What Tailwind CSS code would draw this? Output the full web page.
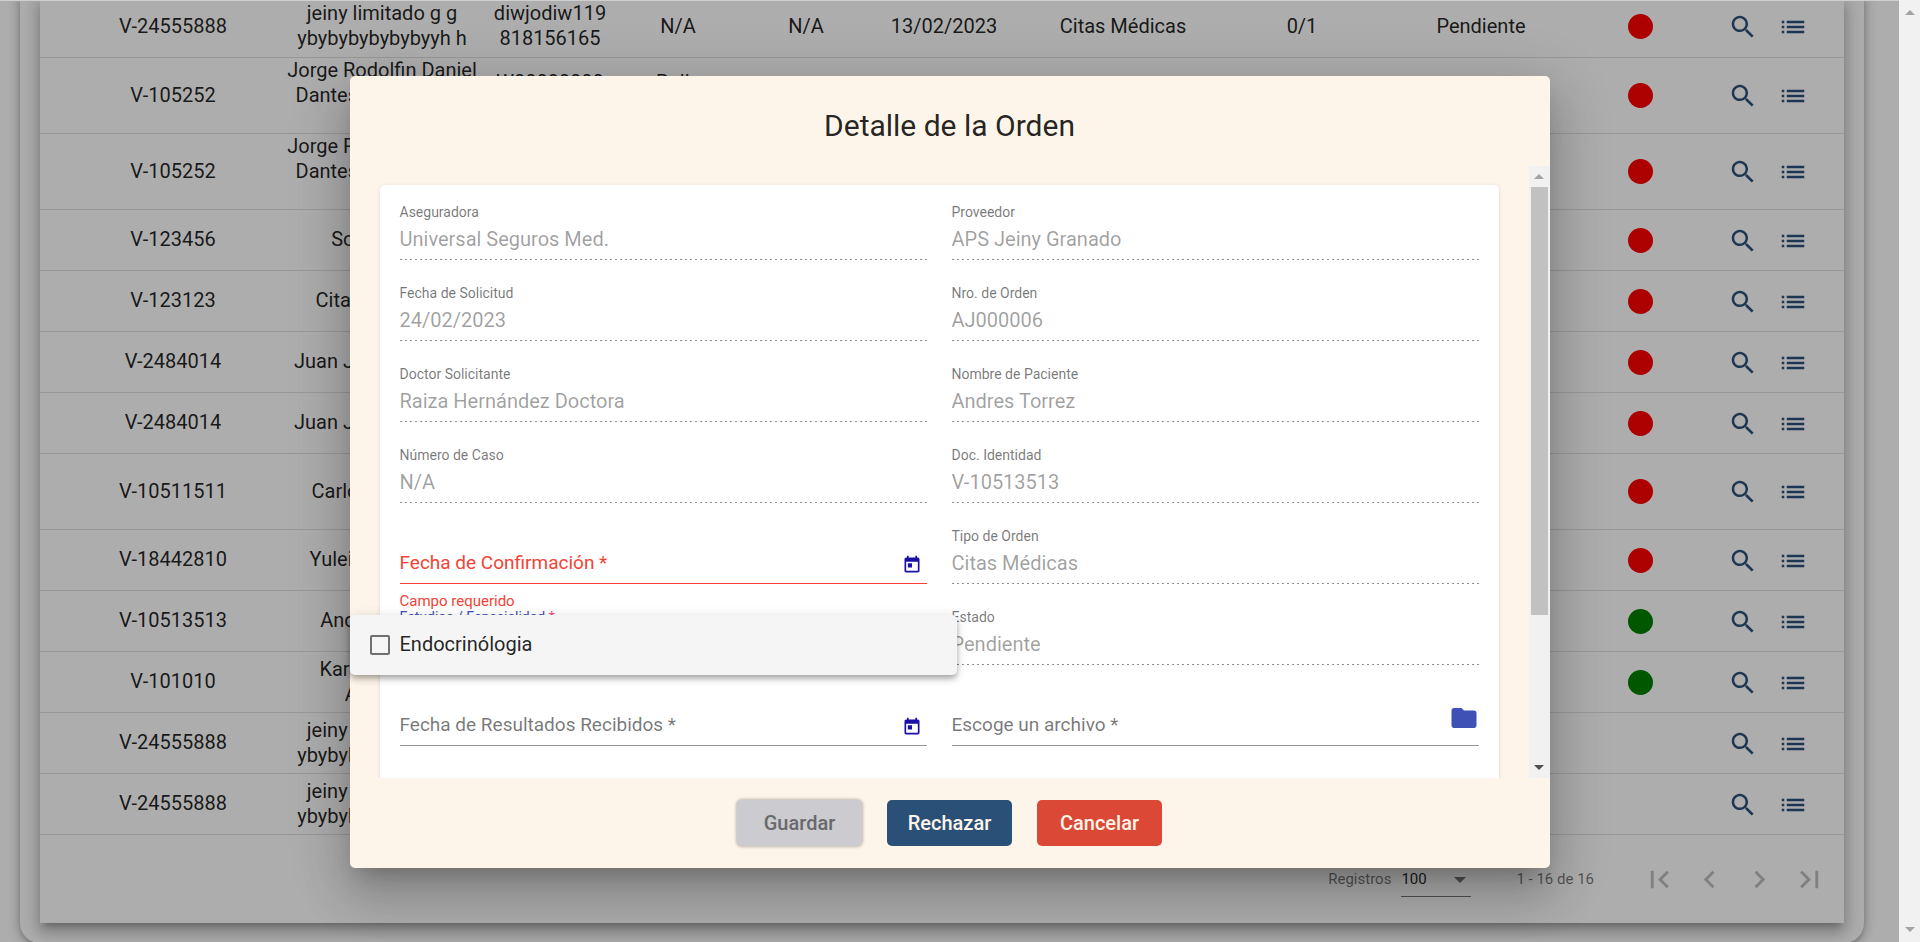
<!DOCTYPE html>
<html lang="es">
<head>
<meta charset="utf-8">
<title>Detalle de la Orden</title>
<script src="https://cdn.jsdelivr.net/npm/@tailwindcss/browser@4"></script>
</head>
<body class="flex h-screen overflow-hidden bg-white font-['Roboto',sans-serif] text-xl leading-[25px] text-black/87">
<svg class="hidden" aria-hidden="true">
  <symbol id="search" viewBox="0 0 24 24"><path d="M15.5 14h-.79l-.28-.27C15.41 12.59 16 11.11 16 9.5 16 5.91 13.09 3 9.5 3S3 5.91 3 9.5 5.91 16 9.5 16c1.61 0 3.09-.59 4.23-1.57l.27.28v.79l5 4.99L20.49 19l-4.99-5zm-6 0C7.01 14 5 11.99 5 9.5S7.01 5 9.5 5 14 7.01 14 9.5 11.99 14 9.5 14z"/></symbol>
  <symbol id="list" viewBox="0 0 24 24"><path d="M3 13h2v-2H3v2zm0 4h2v-2H3v2zm0-8h2V7H3v2zm4 4h14v-2H7v2zm0 4h14v-2H7v2zM7 7v2h14V7H7z"/></symbol>
  <symbol id="today" viewBox="0 0 24 24"><path d="M19 3h-1V1h-2v2H8V1H6v2H5c-1.11 0-1.99.9-1.99 2L3 19c0 1.1.89 2 2 2h14c1.1 0 2-.9 2-2V5c0-1.1-.9-2-2-2zm0 16H5V8h14v11zM7 10h5v5H7z"/></symbol>
  <symbol id="folder" viewBox="0 0 24 24"><path d="M10 4H4c-1.1 0-1.99.9-1.99 2L2 18c0 1.1.9 2 2 2h16c1.1 0 2-.9 2-2V8c0-1.1-.9-2-2-2h-8l-2-2z"/></symbol>
  <symbol id="first" viewBox="0 0 24 24"><path d="M18.41 16.59L13.82 12l4.59-4.59L17 6l-6 6 6 6zM6 6h2v12H6z"/></symbol>
  <symbol id="prev" viewBox="0 0 24 24"><path d="M15.41 7.41L14 6l-6 6 6 6 1.41-1.41L10.83 12z"/></symbol>
  <symbol id="next" viewBox="0 0 24 24"><path d="M10 6L8.59 7.41 13.17 12l-4.58 4.59L10 18l6-6z"/></symbol>
  <symbol id="last" viewBox="0 0 24 24"><path d="M5.59 7.41L10.18 12l-4.59 4.59L7 18l6-6-6-6zM16 6h2v12h-2z"/></symbol>
</svg>

<div class="relative h-full min-w-0 flex-1 overflow-hidden border-t border-[#cfcfcf]">
  <!-- Orders page -->
  <main class="-mt-[5px] px-5">
    <div class="mr-[15px] rounded-b-[20px] px-5 pb-5 shadow-[0_4px_5px_-2px_rgba(0,0,0,.2),0_1px_12px_1px_rgba(0,0,0,.3)]">
      <div class="bg-white pb-5 shadow-[0_6px_6px_-4px_rgba(0,0,0,.2),0_10px_12px_1px_rgba(0,0,0,.16),0_4px_18px_3px_rgba(0,0,0,.16)]">
        <table class="w-full table-fixed border-collapse text-center">
          <colgroup>
            <col class="w-[244px]"><col class="w-[196px]"><col class="w-[140px]"><col class="w-[116px]"><col class="w-[140px]"><col class="w-[136px]"><col class="w-[222px]"><col class="w-[136px]"><col class="w-[222px]"><col class="w-[96px]"><col class="w-[156px]">
          </colgroup>
          <tbody id="rows"></tbody>
        </table>
        <div class="flex h-[68px] items-center justify-end pt-[22px] pr-[10px] text-[15px] text-black/54">
          <label for="size" class="mr-[10px]">Registros</label>
          <div class="relative mr-[45px] border-b border-black/54 pt-1 pb-1">
            <select id="size" class="w-[70px] appearance-none bg-transparent text-black/87"><option>100</option></select>
            <span class="pointer-events-none absolute top-[14px] right-[5px] border-x-6 border-t-6 border-x-transparent border-t-black/54"></span>
          </div>
          <span class="mr-10">1 - 16 de 16</span>
          <button aria-label="Primera página" class="grid size-[50px] place-items-center fill-black/26"><svg class="size-[35px]"><use href="#first"/></svg></button>
          <button aria-label="Página anterior" class="grid size-[50px] place-items-center fill-black/26"><svg class="size-[35px]"><use href="#prev"/></svg></button>
          <button aria-label="Página siguiente" class="grid size-[50px] place-items-center fill-black/26"><svg class="size-[35px]"><use href="#next"/></svg></button>
          <button aria-label="Última página" class="grid size-[50px] place-items-center fill-black/26"><svg class="size-[35px]"><use href="#last"/></svg></button>
        </div>
      </div>
    </div>
  </main>

  <!-- Order dialog over the dimmed page -->
  <div class="absolute inset-0 flex items-center justify-center bg-black/32 pt-px">
    <section role="dialog" aria-labelledby="title" class="relative w-full max-w-[1200px] rounded-[5px] bg-[#fdf5e9] shadow-[0_14px_19px_-9px_rgba(0,0,0,.2),0_30px_48px_4px_rgba(0,0,0,.14),0_11px_58px_10px_rgba(0,0,0,.12)]">
      <h1 id="title" class="px-[30px] pt-[30px] pb-5 text-center text-[30px] leading-[40px]">Detalle de la Orden</h1>
      <div class="flex h-[65vh]">
        <div class="min-w-0 flex-1 overflow-hidden px-[30px] pt-[19px]">
          <form id="form" class="grid h-[700px] grid-cols-2 content-start gap-x-[25px] rounded-[5px] bg-white px-5 pt-[15px] shadow-[0_2px_2px_-1px_rgba(0,0,0,.12),0_1px_4px_0_rgba(0,0,0,.12)]"></form>
        </div>
        <div class="flex w-[21px] flex-col items-center bg-[#f1f1f1] py-2">
          <span class="border-x-5 border-b-5 border-x-transparent border-b-[#a3a3a3]"></span>
          <span class="mt-2 h-[428px] w-[17px] bg-[#c1c1c1]"></span>
          <span class="mt-auto border-x-5 border-t-5 border-x-transparent border-t-[#505050]"></span>
        </div>
      </div>
      <div class="flex justify-center gap-[25px] py-[22px] text-xl font-medium">
        <button disabled class="h-[46px] w-[125px] rounded-[5px] bg-[#cbcbd0] text-[#69696c] shadow-[0_0_3px_1px_rgba(0,0,0,.25)]">Guardar</button>
        <button class="h-[46px] w-[125px] rounded-[5px] bg-[#2b5078] text-[#fdf5e9]">Rechazar</button>
        <button class="h-[46px] w-[125px] rounded-[5px] bg-[#db4835] text-[#fdf5e9]">Cancelar</button>
      </div>
      <label class="absolute top-[539px] left-0 flex h-[60px] w-[607px] items-center gap-[10px] rounded-[5px] bg-[#f5f5f5] px-5 shadow-[0_3px_5px_-1px_rgba(0,0,0,.2),0_5px_6px_0_rgba(0,0,0,.14),0_1px_12px_0_rgba(0,0,0,.12)]">
        <input type="checkbox" class="size-5 appearance-none rounded-[2px] border-2 border-black/54">Endocrinólogia
      </label>
    </section>
  </div>
</div>

<!-- Page scroll bar -->
<div class="flex w-[21px] flex-col items-center justify-between bg-[#f1f1f1] py-[10px]">
  <span class="border-x-5 border-b-5 border-x-transparent border-b-[#a3a3a3]"></span>
  <span class="border-x-5 border-t-5 border-x-transparent border-t-[#a3a3a3]"></span>
</div>

<script>
const limited = ['jeiny limitado g g ybybybybybybyyh h', 'diwjodiw119 818156165', 'N/A', 'N/A', '13/02/2023', 'Citas Médicas', '0/1', 'Pendiente'];
const rows = [
  ['V-24555888', limited, 'red'],
  ['V-105252', ['Jorge Rodolfin Daniel Dantes Rodríguez J Díaz', 'W00000000 000', 'Polic Salud'], 'red', 1],
  ['V-105252', ['Jorge Rodolfin Daniel Dantes Rodríguez J Díaz'], 'red', 1],
  ['V-123456', ['Sol Moreno'], 'red'],
  ['V-123123', ['Cita Preventiva'], 'red'],
  ['V-2484014', ['Juan José Martínez'], 'red'],
  ['V-2484014', ['Juan José Martínez'], 'red'],
  ['V-10511511', ['Carlos Martínez'], 'red', 1],
  ['V-18442810', ['Yuleima Moreno'], 'red'],
  ['V-10513513', ['Andres Torrez'], 'green'],
  ['V-101010', ['Karen Moreno Andrade'], 'green'],
  ['V-24555888', ['jeiny limitado g g ybybybybybybyyh h'], ''],
  ['V-24555888', ['jeiny limitado g g ybybybybybybyyh h'], '']
];
const dots = {
  red: '<span class="inline-block size-[25px] rounded-full bg-[#ff0000] align-middle"></span>',
  green: '<span class="inline-block size-[25px] rounded-full bg-[#008000] align-middle"></span>',
  '': ''
};
document.getElementById('rows').innerHTML = rows.map(([id, cells, dot, tall]) => {
  const filled = [...cells, ...Array(8 - cells.length).fill('')];
  return `<tr class="${tall ? 'h-[76px]' : 'h-[61px]'} border-b border-black/12"><td class="pl-[22px]">${id}</td>` +
    filled.map((c, i) => `<td class="${i === 1 ? 'px-3' : i === 2 ? 'px-6' : ''}">${c}</td>`).join('') +
    `<td>${dots[dot]}</td><td><div class="flex justify-center gap-5 fill-[#2b5078] pt-[2px] pl-[3px]">
      <button aria-label="Ver detalle"><svg class="size-[30px]"><use href="#search"/></svg></button>
      <button aria-label="Ver lista"><svg class="size-[30px]"><use href="#list"/></svg></button></div></td></tr>`;
}).join('');

const fields = [
  ['Aseguradora', 'Universal Seguros Med.'], ['Proveedor', 'APS Jeiny Granado'],
  ['Fecha de Solicitud', '24/02/2023'], ['Nro. de Orden', 'AJ000006'],
  ['Doctor Solicitante', 'Raiza Hernández Doctora'], ['Nombre de Paciente', 'Andres Torrez'],
  ['Número de Caso', 'N/A'], ['Doc. Identidad', 'V-10513513'],
  ['Fecha de Confirmación *', null, 'error'], ['Tipo de Orden', 'Citas Médicas'],
  ['Estudios / Especialidad', null, 'select'], ['Estado', 'Pendiente'],
  ['Fecha de Resultados Recibidos *', null, 'date'], ['Escoge un archivo *', null, 'file']
];
const calendar = '<button type="button" aria-label="Abrir calendario" class="mr-[5px] self-center fill-[#1a10a8]"><svg class="size-5"><use href="#today"/></svg></button>';
const folder = '<button type="button" aria-label="Elegir archivo" class="-mt-[7px] self-start fill-[#3f51b5]"><svg class="size-[30px]"><use href="#folder"/></svg></button>';
document.getElementById('form').innerHTML = fields.map(([label, value, kind], i) => {
  const id = 'f' + i;
  if (kind === 'select') return `<div class="h-[81px]"><label for="${id}" class="block h-6 pt-[2px] text-sm leading-[20px] text-[#3f51b5]">${label} <span class="text-[#ff4081]">*</span></label><select id="${id}" class="block h-9 w-full appearance-none border-b-2 border-[#3f51b5]"><option></option></select></div>`;
  if (value) return `<div class="h-[81px]"><label for="${id}" class="block h-6 pt-[2px] text-sm leading-[20px] text-black/54">${label}</label><input id="${id}" disabled value="${value}" class="block h-[35px] w-full pb-1 text-black/38"><div class="h-px bg-[repeating-linear-gradient(to_right,rgba(0,0,0,.45)_0_2px,transparent_2px_5px)]"></div></div>`;
  const error = kind === 'error';
  return `<div class="h-[81px] pt-6"><div class="flex h-9 border-b ${error ? 'border-[#f44336] text-[#f44336]' : 'border-black/42 text-black/54'}"><label for="${id}" class="pt-[2px] text-[19px] whitespace-nowrap">${label}</label><input id="${id}" class="min-w-0 flex-1 bg-transparent outline-none">${kind === 'file' ? folder : calendar}</div>${error ? '<p class="pt-[7px] text-[15px] leading-[20px] text-[#f44336]">Campo requerido</p>' : ''}</div>`;
}).join('');
</script>
</body>
</html>
